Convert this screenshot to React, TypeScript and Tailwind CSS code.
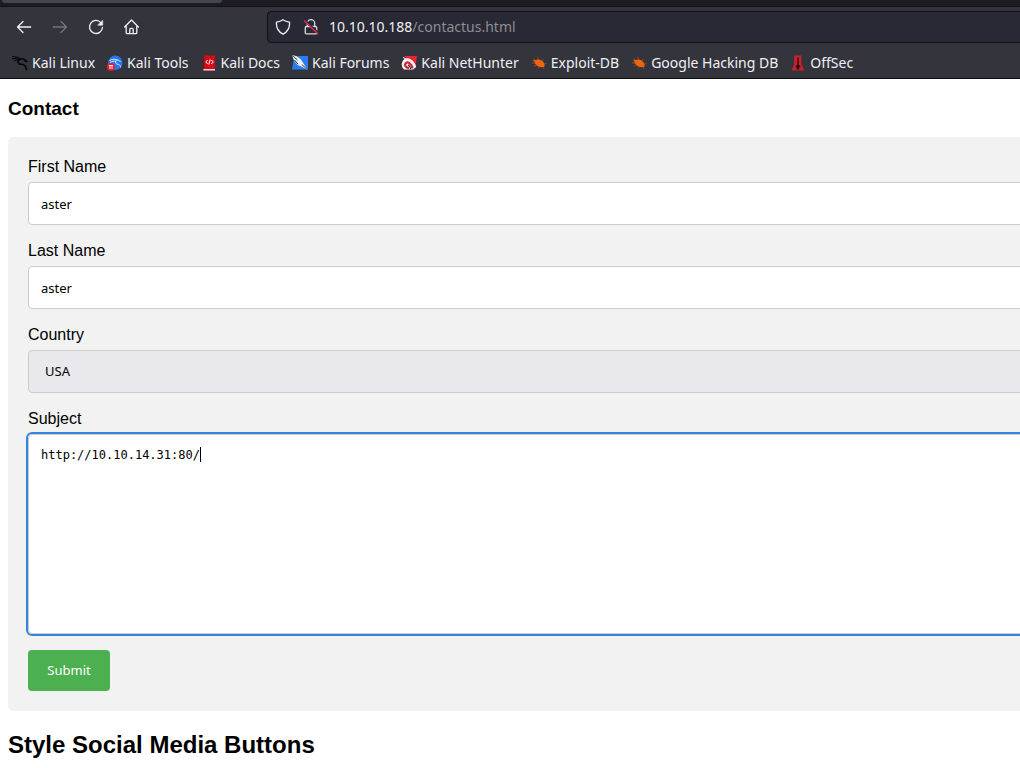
import type { ReactNode } from 'react';

const Icon = ({ children }: { children: ReactNode }) => (
  <svg viewBox="0 0 16 16" className="size-4 shrink-0" aria-hidden="true">{children}</svg>
);

const Bug = () => (
  <Icon>
    <g stroke="#a84a17" strokeWidth="0.9" fill="none">
      <path d="M5 6 2.500 3.500M7.500 5 6.800 2.200M10.500 6l1.700-1.800M4 8H.8M5.500 9.800l-2.700 1.700M8.500 11.500 7 13.500M12.200 11.500l.6 2.300M13 9l2.500-.6" />
    </g>
    <path d="M1.800 4.800 4.300 5.300C6 4 8.500 4.200 10.600 5.600c2 1.300 3.200 3.200 3.100 5.600-1.500 1.200-4 1.200-6.200.3-2-.8-3.300-2.200-3.700-4Z" fill="#ee6413" />
  </Icon>
);

const bookmarks: { name: string; icon: ReactNode }[] = [
  {
    name: 'Kali Linux',
    icon: (
      <Icon>
        <g fill="none" stroke="#050506" strokeLinecap="round" strokeLinejoin="round">
          <path d="M.6 1.600c3 .1 5.500.5 8.200 2.300M.4 3.700c2.600-.4 4.600-.2 7.400.7M2.200 5.900c1.500-.8 3-1.100 4.700-1" strokeWidth="1" />
          <path d="M8.200 4.300C6 5.200 5.200 7 6.500 8.300c1.300 1.200 4.200.8 6 1.900 1.400.9 1.800 2.300 2 4.600" strokeWidth="1.600" />
          <path d="M8 4.300c2.300-.6 4.300-.1 5.600 1l1.600 1.400-2.400-.3" strokeWidth="1.300" />
        </g>
      </Icon>
    ),
  },
  {
    name: 'Kali Tools',
    icon: (
      <Icon>
        <circle cx="8.300" cy="7.800" r="7.200" fill="#2777ef" />
        <path d="M2.500 5.500c3.500-1.800 6-1.500 8 .1M3 7.600c2-1.400 4-1.700 6-1.200M8.500 5c2-.5 4 .4 5 2M9 6.500c-1 2 .5 2.600 2.500 3 1.500.4 2 1.400 2 3" stroke="#e8f2ff" strokeWidth="0.9" fill="none" />
        <circle cx="3.900" cy="11.900" r="4" fill="#ea1c2d" />
        <path d="M1.800 10.500H6M3 10.500v3.500M5 10.500v3.500" stroke="#fff" strokeWidth="0.9" />
      </Icon>
    ),
  },
  {
    name: 'Kali Docs',
    icon: (
      <Icon>
        <path d="M2 .5h12v15H2z" fill="#d40d18" />
        <path d="M2 .5h1.500v13H2z" fill="#83101c" />
        <path d="M2.500 14H14v1.500H2.500z" fill="#e9d4d6" />
        <path d="M6.700 5 4.700 7l2 2M10.300 5l2 2-2 2M9.200 4.500 7.800 9.500" stroke="#fff" strokeWidth="1" fill="none" />
      </Icon>
    ),
  },
  {
    name: 'Kali Forums',
    icon: (
      <Icon>
        <path d="M2.500 1H16v13.500H0Z" fill="#287df2" />
        <path d="M0 0 4 1 8.500 4l3 4.500 4 6.500-6-3.500L5.500 10 2 5.500Z" fill="#f5f6f8" />
        <path d="m.5.500 5 4.500M2.500 5l3.600 4.300M10 9.500l5 5" stroke="#25303d" strokeWidth="1" />
      </Icon>
    ),
  },
  {
    name: 'Kali NetHunter',
    icon: (
      <Icon>
        <path d="M3 1h13l-1.500 10L8 6Z" fill="#ec2434" />
        <path d="M.8 9.500C.8 4.500 5.500 1.500 10 4.500c3 2 4.500 4.500 5.200 7.500l-3 2.500H3C1.500 13 .8 11.500.8 9.500Z" fill="#f5f5f5" />
        <path d="M11.500 13.500C10.500 8.500 6.500 6 4.500 8.500c-1.300 1.800.3 4.300 3.500 4.500" stroke="#d3202f" strokeWidth="2.200" fill="none" />
        <path d="M7 9.800c1.500.8 2.300 2.300 2.600 4.200" stroke="#20232a" strokeWidth="1.100" fill="none" />
        <path d="m2 2.500 3 1.500" stroke="#f5f5f5" strokeWidth="1" />
      </Icon>
    ),
  },
  { name: 'Exploit-DB', icon: <Bug /> },
  { name: 'Google Hacking DB', icon: <Bug /> },
  {
    name: 'OffSec',
    icon: (
      <Icon>
        <path d="M4.200.5h7.200v8.200c0 1.300 1 2.400 3.100 6.800H1.500c2-4.400 2.700-5.500 2.700-6.800Z" fill="#c9202a" />
        <path d="M7.300 2.500h1.400v7l2 2.200-1.500.9v2H6.800v-2l-1.500-.9 2-2.200Z" fill="#270d12" />
      </Icon>
    ),
  },
];

const navButton = 'flex size-9 items-center justify-center';
const field = 'mt-1.5 mb-4 block h-[43px] w-full rounded border border-[#ccc] font-["Noto_Sans",sans-serif] text-[13px] text-black outline-none';

function NavIcon({ children }: { children: ReactNode }) {
  return (
    <svg viewBox="0 0 16 16" className="size-4" fill="none" stroke="currentColor" strokeWidth="1.300" strokeLinecap="round" strokeLinejoin="round" aria-hidden="true">
      {children}
    </svg>
  );
}

function BrowserBar() {
  return (
    <header className="border-b border-[#0c0c0d] bg-[#33343c] font-['Noto_Sans',sans-serif] text-[#f0f0f4]">
      <div className="h-[7px] border-b border-[#121217] bg-[#1c1c22]">
        <div className="ml-0.5 h-[3px] w-[220px] rounded-b bg-[#44454d]" />
      </div>
      <div className="flex h-10 items-center pl-1.5">
        <nav className="flex" aria-label="Browser">
          <button type="button" aria-label="Back" className={navButton}>
            <NavIcon><path d="M14.700 8H1.500M7 2.500 1.500 8 7 13.500" /></NavIcon>
          </button>
          <button type="button" aria-label="Forward" disabled className={`${navButton} text-[#75767c]`}>
            <NavIcon><path d="M1.300 8h13.200M9 2.500 14.500 8 9 13.500" /></NavIcon>
          </button>
          <button type="button" aria-label="Reload" className={navButton}>
            <NavIcon>
              <path d="M13 3.800A6.500 6.500 0 1 0 14.500 8.300" />
              <path d="M14.700 1.500v4.700H10Z" fill="currentColor" strokeWidth="0.600" />
            </NavIcon>
          </button>
          <button type="button" aria-label="Home" className={navButton}>
            <NavIcon>
              <path d="M.6 8 7.500 1l6.900 7M2.200 7v6.800c0 .5.300.8.800.8h9c.5 0 .8-.3.800-.8V7M5.800 14.500v-4c0-.7.400-1.100 1-1.100h1.400c.6 0 1 .4 1 1.100v4" />
            </NavIcon>
          </button>
        </nav>
        <div className="-mr-2 ml-[117px] flex h-8 flex-1 items-center rounded border border-[#0f1014] bg-[#282934] pl-[7px]">
          <NavIcon><path d="M8 .8c2 1.500 4 2 6.500 2.300.5 5.500-1.500 9.500-6.500 12.100C3 12.600 1 8.600 1.500 3.100 4 2.800 6 2.300 8 .8Z" /></NavIcon>
          <svg viewBox="0 0 16 16" className="ml-3 size-4" fill="none" aria-hidden="true">
            <path d="M4.300 7.500V4.300a3.700 3.700 0 0 1 7.400 0v3.200M3.500 7.500h9c.8 0 1.200.4 1.200 1.200v5c0 .8-.4 1.200-1.200 1.200h-9c-.8 0-1.200-.4-1.200-1.200v-5c0-.8.400-1.200 1.200-1.200Z" stroke="#d9dade" strokeWidth="1.300" />
            <path d="m1.800.7 14 13.500" stroke="#282934" strokeWidth="1.500" />
            <path d="m1 1.500 14 13.500" stroke="#e22850" strokeWidth="1.500" />
          </svg>
          <a href="#contact" className="ml-2.5 text-[14px] leading-5">
            10.10.10.188<span className="text-[#8c8d94]">/contactus.html</span>
          </a>
        </div>
      </div>
      <nav aria-label="Bookmarks" className="flex h-[31px] items-center gap-3 pl-3 text-[14px] whitespace-nowrap">
        {bookmarks.map(({ name, icon }) => (
          <a key={name} href="#contact" className="flex items-center gap-1">
            {icon}
            <span>{name}</span>
          </a>
        ))}
      </nav>
    </header>
  );
}

export default function App() {
  return (
    <div className="min-h-screen overflow-hidden bg-white font-['Liberation_Sans',Arial,sans-serif] text-base leading-[19px] text-black">
      <BrowserBar />
      <main id="contact" className="pl-2">
        <h3 className="pt-[19px] pb-[18px] text-[19px] leading-[21px] font-bold">Contact</h3>
        <form className="-mr-8 rounded-[5px] bg-[#f2f2f2] p-5" onSubmit={(event) => event.preventDefault()}>
          <label htmlFor="first-name" className="block">First Name</label>
          <input id="first-name" type="text" defaultValue="aster" className={`${field} bg-white px-3`} />
          <label htmlFor="last-name" className="block">Last Name</label>
          <input id="last-name" type="text" defaultValue="aster" className={`${field} bg-white px-3`} />
          <label htmlFor="country" className="block">Country</label>
          <select id="country" defaultValue="usa" className={`${field} appearance-none bg-[#e9e9ed] px-4`}>
            <option value="australia">Australia</option>
            <option value="canada">Canada</option>
            <option value="usa">USA</option>
          </select>
          <label htmlFor="subject" className="block">Subject</label>
          <div className="relative mt-1.5 mb-4">
            <textarea
              id="subject"
              defaultValue="http://10.10.14.31:80/"
              className="block h-[200px] w-full resize-none rounded border border-[#ccc] bg-white px-3 py-3 font-['DejaVu_Sans_Mono',monospace] text-[12px] leading-4 outline-2 outline-[#3584e4]"
            />
            <span className="pointer-events-none absolute top-[13px] left-[172px] h-[15px] w-px bg-black" />
          </div>
          <button type="submit" className="block h-[41px] w-[82px] rounded bg-[#4caf50] font-['Noto_Sans',sans-serif] text-[13px] text-white">
            Submit
          </button>
        </form>
        <h2 className="pt-5 pb-5 text-2xl leading-7 font-bold">Style Social Media Buttons</h2>
      </main>
    </div>
  );
}
